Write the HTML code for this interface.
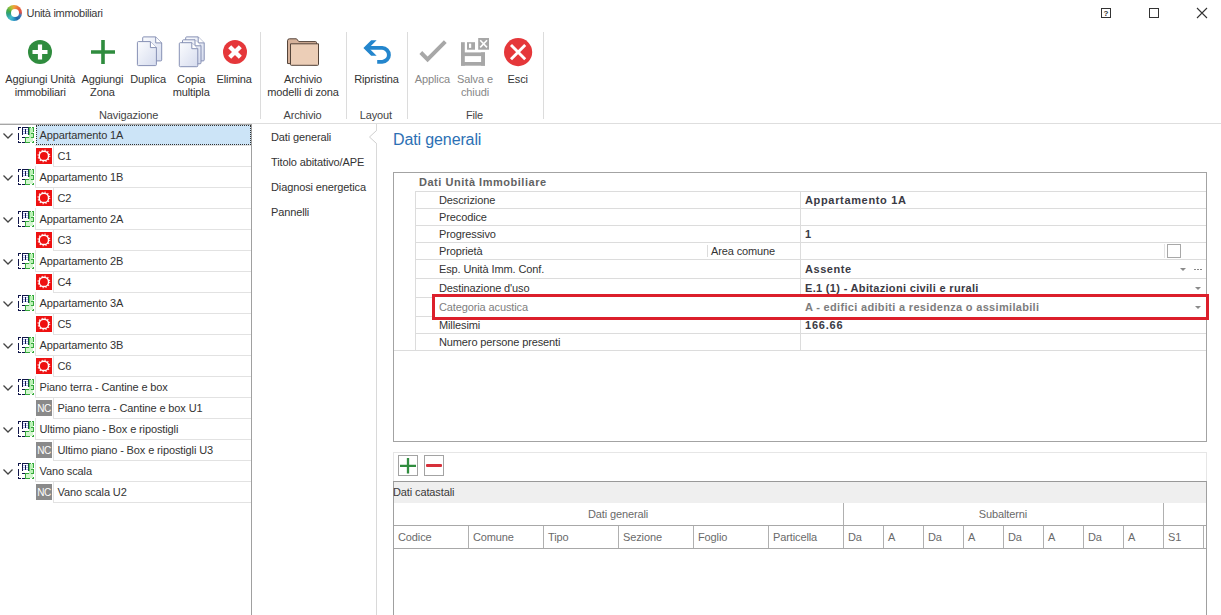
<!DOCTYPE html>
<html><head><meta charset="utf-8"><title>Unità immobiliari</title>
<style>
html,body{margin:0;padding:0;background:#fff;}
body{width:1221px;height:615px;position:relative;overflow:hidden;font-family:"Liberation Sans",sans-serif;font-size:11px;color:#333;}
.t{position:absolute;white-space:nowrap;line-height:13px;margin-top:1px;letter-spacing:-0.12px;}
.c{position:absolute;white-space:nowrap;line-height:13px;text-align:center;transform:translateX(-50%);margin-top:1px;letter-spacing:-0.12px;}
.l{position:absolute;background:#dcdcdc;}
.d{position:absolute;background:#9b9b9b;}
.b{font-weight:bold;}
.g{color:#878787;}
svg{position:absolute;overflow:visible;}
</style></head><body>

<div style="position:absolute;left:6px;top:5px;width:16px;height:16px;border-radius:50%;background:conic-gradient(from 0deg,#f2a23a 0deg,#e8683c 45deg,#dc4f48 85deg,#3a78b8 110deg,#1f64a6 150deg,#2f9fc8 185deg,#45bccc 215deg,#2fa08a 255deg,#3fa84a 290deg,#a8c43a 330deg,#f2a23a 360deg)"></div>
<div style="position:absolute;left:10.500px;top:9px;width:8px;height:8px;border-radius:50%;background:#fff"></div>
<div class="t" id="title" style="left:26.500px;top:6px;font-size:11px;color:#3a3a3a;letter-spacing:-0.3px">Unità immobiliari</div>
<svg style="left:1100px;top:7px" width="12" height="12" viewBox="0 0 12 12"><rect x="1.5" y="1.5" width="9" height="9" fill="none" stroke="#333" stroke-width="1"/><text x="6" y="9" font-size="8" font-weight="bold" text-anchor="middle" fill="#333" font-family="Liberation Sans, sans-serif">?</text></svg>
<svg style="left:1148px;top:7px" width="12" height="12" viewBox="0 0 12 12"><rect x="1.5" y="1.5" width="9" height="9" fill="none" stroke="#333" stroke-width="1"/></svg>
<svg style="left:1196px;top:7px" width="12" height="12" viewBox="0 0 12 12"><path d="M1 1L11 11M11 1L1 11" stroke="#333" stroke-width="1.1" fill="none"/></svg>
<div class="c " style="left:40.3px;top:72px">Aggiungi Unità<br>immobiliari</div>
<div class="c " style="left:102.4px;top:72px">Aggiungi<br>Zona</div>
<div class="c " style="left:148.2px;top:72px">Duplica</div>
<div class="c " style="left:191.2px;top:72px">Copia<br>multipla</div>
<div class="c " style="left:234.2px;top:72px">Elimina</div>
<div class="c " style="left:303px;top:72px">Archivio<br>modelli di zona</div>
<div class="c " style="left:376.5px;top:72px">Ripristina</div>
<div class="c g" style="left:432.4px;top:72px">Applica</div>
<div class="c g" style="left:475px;top:72px">Salva e<br>chiudi</div>
<div class="c " style="left:517.7px;top:72px">Esci</div>
<div class="c" style="left:128.6px;top:108px;color:#444">Navigazione</div>
<div class="c" style="left:302.5px;top:108px;color:#444">Archivio</div>
<div class="c" style="left:375.8px;top:108px;color:#444">Layout</div>
<div class="c" style="left:474.5px;top:108px;color:#444">File</div>
<div class="l" style="left:260px;top:32px;width:1px;height:87px"></div>
<div class="l" style="left:346px;top:32px;width:1px;height:87px"></div>
<div class="l" style="left:407px;top:32px;width:1px;height:87px"></div>
<div class="l" style="left:543px;top:32px;width:1px;height:87px"></div>
<div class="l" style="left:0;top:123px;width:1221px;height:1px;background:#dedede"></div>
<svg style="left:28px;top:40px" width="24" height="24" viewBox="0 0 24 24"><circle cx="12" cy="12" r="12" fill="#2f8c3e"/><path d="M12 4.5V19.5M4.5 12H19.5" stroke="#fff" stroke-width="4.2"/></svg>
<svg style="left:91px;top:40px" width="24" height="24" viewBox="0 0 24 24"><path d="M12 0V24M0 12H24" stroke="#2f8c3e" stroke-width="3.6"/></svg>
<svg style="left:0;top:0" width="260" height="70" viewBox="0 0 260 70"><defs><linearGradient id="dg" x1="0" y1="0" x2="1" y2="1"><stop offset="0" stop-color="#fbfcfe"/><stop offset="1" stop-color="#d6dcee"/></linearGradient></defs><g transform="translate(142.7,36.4)"><path d="M1 .5H13 L19 6.5 V23.5 a1 1 0 0 1 -1 1 H1 a1 1 0 0 1 -1 -1 V1.5 a1 1 0 0 1 1 -1z" fill="url(#dg)" stroke="#8690b4" stroke-width="1"/><path d="M13 .5 V6.5 H19" fill="#fff" stroke="#8690b4" stroke-width="1"/></g><g transform="translate(137.4,41.1)"><path d="M1 .5H13 L19 6.5 V23.5 a1 1 0 0 1 -1 1 H1 a1 1 0 0 1 -1 -1 V1.5 a1 1 0 0 1 1 -1z" fill="url(#dg)" stroke="#8690b4" stroke-width="1"/><path d="M13 .5 V6.5 H19" fill="#fff" stroke="#8690b4" stroke-width="1"/></g><g transform="translate(185.7,36.4)"><path d="M1 .5H12.5 L18.5 6.5 V23.5 a1 1 0 0 1 -1 1 H1 a1 1 0 0 1 -1 -1 V1.5 a1 1 0 0 1 1 -1z" fill="url(#dg)" stroke="#8690b4" stroke-width="1"/><path d="M12.5 .5 V6.5 H18.5" fill="#fff" stroke="#8690b4" stroke-width="1"/></g><g transform="translate(182.5,39.3)"><path d="M1 .5H12.5 L18.5 6.5 V23.5 a1 1 0 0 1 -1 1 H1 a1 1 0 0 1 -1 -1 V1.5 a1 1 0 0 1 1 -1z" fill="url(#dg)" stroke="#8690b4" stroke-width="1"/><path d="M12.5 .5 V6.5 H18.5" fill="#fff" stroke="#8690b4" stroke-width="1"/></g><g transform="translate(179.3,42.2)"><path d="M1 .5H12.5 L18.5 6.5 V23.5 a1 1 0 0 1 -1 1 H1 a1 1 0 0 1 -1 -1 V1.5 a1 1 0 0 1 1 -1z" fill="url(#dg)" stroke="#8690b4" stroke-width="1"/><path d="M12.5 .5 V6.5 H18.5" fill="#fff" stroke="#8690b4" stroke-width="1"/></g></svg>
<svg style="left:223px;top:40px" width="24" height="24" viewBox="0 0 24 24"><circle cx="12" cy="12" r="12" fill="#e5373a"/><path d="M6.700 6.700L17.300 17.300M17.300 6.700L6.700 17.300" stroke="#fff" stroke-width="4.300"/></svg>
<svg style="left:287px;top:38px" width="33" height="28" viewBox="0 0 33 28"><path d="M.5 25.500V2.800a2 2 0 0 1 2 -2H9.500l2.300 2.800H28.500a1 1 0 0 1 1 1V27z" fill="#d6b29b" stroke="#54443a" stroke-width="1"/><path d="M3.500 5.800H31.500V26.500a.8 .8 0 0 1 -.8 .8H4.300a.8 .8 0 0 1 -.8 -.8z" fill="#ecceb7" stroke="#54443a" stroke-width="1"/></svg>
<svg style="left:363px;top:40px" width="29" height="24" viewBox="0 0 29 24"><path d="M13.650 .160H8.190L.380 7.970L8.190 15.770H13.650L5.840 7.970z" fill="#2486cd"/><path d="M5 7.900H19.200A6.980 6.980 0 0 1 19.200 21.850H14.200" fill="none" stroke="#2486cd" stroke-width="3.900"/></svg>
<svg style="left:419px;top:40px" width="28" height="23" viewBox="0 0 28 23"><path d="M1.800 12.500L8.600 19.300L26.300 1.600" fill="none" stroke="#a7a7a7" stroke-width="4"/></svg>
<svg style="left:461px;top:38px" width="28" height="28" viewBox="0 0 28 28"><g fill="#a7a7a7"><rect x="0" y="4.200" width="3.800" height="23.500"/><rect x="0" y="24" width="24" height="3.700"/><rect x="20.100" y="14.400" width="3.900" height="13.300"/><rect x="0" y="14.400" width="24" height="3.700"/><rect x="6" y="4.200" width="8" height="7.500"/><rect x="17.200" y="0" width="10.800" height="11.700"/></g><rect x="8" y="5.600" width="2.200" height="4.300" fill="#fff"/><path d="M19.200 2.300L26 9.400M26 2.300L19.200 9.400" stroke="#fff" stroke-width="1.600"/></svg>
<svg style="left:504px;top:38px" width="28" height="28" viewBox="0 0 28 28"><circle cx="14.100" cy="14.100" r="14.100" fill="#e5373a"/><path d="M7 7L21.200 21.200M21.200 7L7 21.200" stroke="#fff" stroke-width="2.900"/></svg>
<svg width="0" height="0" style="left:0;top:0"><defs><g id="fp" shape-rendering="crispEdges"><rect x="11" y="1" width="4" height="14" fill="#bdf3b8"/><rect x="8" y="11" width="7" height="4" fill="#d3f7cf"/><rect x="5" y="2" width="2" height="1" fill="#b9c2f6"/><rect x="8" y="2" width="2" height="1" fill="#b9c2f6"/><rect x="5" y="4" width="2" height="1" fill="#b9c2f6"/><rect x="8" y="4" width="2" height="1" fill="#b9c2f6"/><rect x="5" y="6" width="2" height="1" fill="#b9c2f6"/><rect x="8" y="6" width="2" height="1" fill="#b9c2f6"/><rect x="0" y="0" width="1" height="3" fill="#10164a"/><rect x="0" y="6" width="1" height="7" fill="#10164a"/><rect x="0" y="14" width="1" height="2" fill="#10164a"/><rect x="0" y="0" width="3" height="1" fill="#10164a"/><rect x="4" y="0" width="6" height="1" fill="#10164a"/><rect x="4" y="0" width="1" height="8" fill="#10164a"/><rect x="7" y="2" width="1" height="5" fill="#10164a"/><rect x="10" y="0" width="1" height="8" fill="#164a3e"/><rect x="4" y="10" width="3" height="1" fill="#10164a"/><rect x="0" y="15" width="3" height="1" fill="#10164a"/><rect x="4" y="15" width="3" height="1" fill="#10164a"/><rect x="7" y="10" width="4" height="1" fill="#36a93c"/><rect x="13" y="10" width="3" height="1" fill="#36a93c"/><rect x="7" y="10" width="1" height="6" fill="#36a93c"/><rect x="7" y="15" width="5" height="1" fill="#36a93c"/><rect x="14" y="15" width="2" height="1" fill="#36a93c"/><rect x="15" y="0" width="1" height="5" fill="#36a93c"/><rect x="15" y="6" width="1" height="5" fill="#36a93c"/><rect x="15" y="14" width="1" height="2" fill="#36a93c"/><rect x="11" y="0" width="2" height="1" fill="#36a93c"/><rect x="14" y="0" width="2" height="1" fill="#36a93c"/><rect x="11" y="1" width="1" height="7" fill="#58c85c"/><rect x="13" y="6" width="3" height="1" fill="#36a93c"/></g><g id="rc"><rect width="16" height="16" fill="#ee1111"/><circle cx="7.900" cy="7.900" r="4.700" fill="none" stroke="#fff" stroke-width="1.500"/><circle cx="7.900" cy="7.900" r="5.800" fill="none" stroke="#fff" stroke-width="1.200" stroke-dasharray="1.100 1.937"/></g><g id="ch"><path d="M.5 .5L5 5L9.500 .5" fill="none" stroke="#444" stroke-width="1.300"/></g></defs></svg>
<div class="d" style="left:0;top:124px;width:252px;height:1px;background:#a6a6a6"></div><div style="position:absolute;left:36px;top:125px;width:215px;height:20px;background:#cce4f7;box-sizing:border-box;border:1px dotted #333"></div>
<div class="l" style="left:35px;top:145px;width:216px;height:1px;background:#e2e2e2"></div>
<svg style="left:3px;top:133px" width="10" height="6"><use href="#ch"/></svg>
<svg style="left:18px;top:127px" width="16" height="16"><use href="#fp"/></svg>
<div class="t" style="left:39.500px;top:128px">Appartamento 1A</div>
<div class="l" style="left:53px;top:166px;width:198px;height:1px;background:#e2e2e2"></div>
<div class="l" style="left:53px;top:145px;width:1px;height:21px;background:#e2e2e2"></div>
<svg style="left:36px;top:148px" width="16" height="16"><use href="#rc"/></svg>
<div class="t" style="left:57.500px;top:149px">C1</div>
<div class="l" style="left:35px;top:187px;width:216px;height:1px;background:#e2e2e2"></div>
<div class="l" style="left:35px;top:166px;width:1px;height:21px;background:#e2e2e2"></div>
<svg style="left:3px;top:175px" width="10" height="6"><use href="#ch"/></svg>
<svg style="left:18px;top:169px" width="16" height="16"><use href="#fp"/></svg>
<div class="t" style="left:39.500px;top:170px">Appartamento 1B</div>
<div class="l" style="left:53px;top:208px;width:198px;height:1px;background:#e2e2e2"></div>
<div class="l" style="left:53px;top:187px;width:1px;height:21px;background:#e2e2e2"></div>
<svg style="left:36px;top:190px" width="16" height="16"><use href="#rc"/></svg>
<div class="t" style="left:57.500px;top:191px">C2</div>
<div class="l" style="left:35px;top:229px;width:216px;height:1px;background:#e2e2e2"></div>
<div class="l" style="left:35px;top:208px;width:1px;height:21px;background:#e2e2e2"></div>
<svg style="left:3px;top:217px" width="10" height="6"><use href="#ch"/></svg>
<svg style="left:18px;top:211px" width="16" height="16"><use href="#fp"/></svg>
<div class="t" style="left:39.500px;top:212px">Appartamento 2A</div>
<div class="l" style="left:53px;top:250px;width:198px;height:1px;background:#e2e2e2"></div>
<div class="l" style="left:53px;top:229px;width:1px;height:21px;background:#e2e2e2"></div>
<svg style="left:36px;top:232px" width="16" height="16"><use href="#rc"/></svg>
<div class="t" style="left:57.500px;top:233px">C3</div>
<div class="l" style="left:35px;top:271px;width:216px;height:1px;background:#e2e2e2"></div>
<div class="l" style="left:35px;top:250px;width:1px;height:21px;background:#e2e2e2"></div>
<svg style="left:3px;top:259px" width="10" height="6"><use href="#ch"/></svg>
<svg style="left:18px;top:253px" width="16" height="16"><use href="#fp"/></svg>
<div class="t" style="left:39.500px;top:254px">Appartamento 2B</div>
<div class="l" style="left:53px;top:292px;width:198px;height:1px;background:#e2e2e2"></div>
<div class="l" style="left:53px;top:271px;width:1px;height:21px;background:#e2e2e2"></div>
<svg style="left:36px;top:274px" width="16" height="16"><use href="#rc"/></svg>
<div class="t" style="left:57.500px;top:275px">C4</div>
<div class="l" style="left:35px;top:313px;width:216px;height:1px;background:#e2e2e2"></div>
<div class="l" style="left:35px;top:292px;width:1px;height:21px;background:#e2e2e2"></div>
<svg style="left:3px;top:301px" width="10" height="6"><use href="#ch"/></svg>
<svg style="left:18px;top:295px" width="16" height="16"><use href="#fp"/></svg>
<div class="t" style="left:39.500px;top:296px">Appartamento 3A</div>
<div class="l" style="left:53px;top:334px;width:198px;height:1px;background:#e2e2e2"></div>
<div class="l" style="left:53px;top:313px;width:1px;height:21px;background:#e2e2e2"></div>
<svg style="left:36px;top:316px" width="16" height="16"><use href="#rc"/></svg>
<div class="t" style="left:57.500px;top:317px">C5</div>
<div class="l" style="left:35px;top:355px;width:216px;height:1px;background:#e2e2e2"></div>
<div class="l" style="left:35px;top:334px;width:1px;height:21px;background:#e2e2e2"></div>
<svg style="left:3px;top:343px" width="10" height="6"><use href="#ch"/></svg>
<svg style="left:18px;top:337px" width="16" height="16"><use href="#fp"/></svg>
<div class="t" style="left:39.500px;top:338px">Appartamento 3B</div>
<div class="l" style="left:53px;top:376px;width:198px;height:1px;background:#e2e2e2"></div>
<div class="l" style="left:53px;top:355px;width:1px;height:21px;background:#e2e2e2"></div>
<svg style="left:36px;top:358px" width="16" height="16"><use href="#rc"/></svg>
<div class="t" style="left:57.500px;top:359px">C6</div>
<div class="l" style="left:35px;top:397px;width:216px;height:1px;background:#e2e2e2"></div>
<div class="l" style="left:35px;top:376px;width:1px;height:21px;background:#e2e2e2"></div>
<svg style="left:3px;top:385px" width="10" height="6"><use href="#ch"/></svg>
<svg style="left:18px;top:379px" width="16" height="16"><use href="#fp"/></svg>
<div class="t" style="left:39.500px;top:380px">Piano terra - Cantine e box</div>
<div class="l" style="left:53px;top:418px;width:198px;height:1px;background:#e2e2e2"></div>
<div class="l" style="left:53px;top:397px;width:1px;height:21px;background:#e2e2e2"></div>
<div style="position:absolute;left:36px;top:400px;width:16px;height:16px;background:#8a8a8a;color:#fff;font-size:10px;line-height:18px;text-align:center;letter-spacing:-0.5px;overflow:hidden">NC</div>
<div class="t" style="left:57.500px;top:401px">Piano terra - Cantine e box U1</div>
<div class="l" style="left:35px;top:439px;width:216px;height:1px;background:#e2e2e2"></div>
<div class="l" style="left:35px;top:418px;width:1px;height:21px;background:#e2e2e2"></div>
<svg style="left:3px;top:427px" width="10" height="6"><use href="#ch"/></svg>
<svg style="left:18px;top:421px" width="16" height="16"><use href="#fp"/></svg>
<div class="t" style="left:39.500px;top:422px">Ultimo piano - Box e ripostigli</div>
<div class="l" style="left:53px;top:460px;width:198px;height:1px;background:#e2e2e2"></div>
<div class="l" style="left:53px;top:439px;width:1px;height:21px;background:#e2e2e2"></div>
<div style="position:absolute;left:36px;top:442px;width:16px;height:16px;background:#8a8a8a;color:#fff;font-size:10px;line-height:18px;text-align:center;letter-spacing:-0.5px;overflow:hidden">NC</div>
<div class="t" style="left:57.500px;top:443px">Ultimo piano - Box e ripostigli U3</div>
<div class="l" style="left:35px;top:481px;width:216px;height:1px;background:#e2e2e2"></div>
<div class="l" style="left:35px;top:460px;width:1px;height:21px;background:#e2e2e2"></div>
<svg style="left:3px;top:469px" width="10" height="6"><use href="#ch"/></svg>
<svg style="left:18px;top:463px" width="16" height="16"><use href="#fp"/></svg>
<div class="t" style="left:39.500px;top:464px">Vano scala</div>
<div class="l" style="left:53px;top:502px;width:198px;height:1px;background:#e2e2e2"></div>
<div class="l" style="left:53px;top:481px;width:1px;height:21px;background:#e2e2e2"></div>
<div style="position:absolute;left:36px;top:484px;width:16px;height:16px;background:#8a8a8a;color:#fff;font-size:10px;line-height:18px;text-align:center;letter-spacing:-0.5px;overflow:hidden">NC</div>
<div class="t" style="left:57.500px;top:485px">Vano scala U2</div>
<div class="d" style="left:251px;top:124px;width:1px;height:491px;background:#a0a0a0"></div>
<div class="t" style="left:271px;top:130px">Dati generali</div>
<div class="t" style="left:271px;top:155px">Titolo abitativo/APE</div>
<div class="t" style="left:271px;top:180px">Diagnosi energetica</div>
<div class="t" style="left:271px;top:205px">Pannelli</div>
<div class="l" style="left:376px;top:124px;width:1px;height:491px;background:#d9d9d9"></div>
<svg style="left:368px;top:129px" width="10" height="16" viewBox="0 0 10 16"><path d="M9.500 0V1.500L2 8L9.500 14.500V16" fill="#fff" stroke="none"/><path d="M8.500 1.500L1.500 8L8.500 14.500" fill="none" stroke="#cfcfcf" stroke-width="1"/><rect x="8.200" y="1.800" width="1.800" height="12.400" fill="#fff"/></svg>
<div class="t" id="h1" style="left:393px;top:129px;font-size:16px;line-height:20px;color:#2c70b4">Dati generali</div>
<div style="position:absolute;left:393px;top:172px;width:814px;height:270px;box-sizing:border-box;border:1px solid #a3a3a3"></div>
<div class="t b" id="pgh" style="left:419px;top:175px;color:#626262;letter-spacing:0.52px">Dati Unità Immobiliare</div>
<div class="l" style="left:415px;top:191px;width:791px;height:1px"></div>
<div class="l" style="left:415px;top:208px;width:791px;height:1px"></div>
<div class="l" style="left:415px;top:225px;width:791px;height:1px"></div>
<div class="l" style="left:415px;top:242px;width:791px;height:1px"></div>
<div class="l" style="left:415px;top:259px;width:791px;height:1px"></div>
<div class="l" style="left:415px;top:278px;width:791px;height:1px"></div>
<div class="l" style="left:415px;top:297px;width:791px;height:1px"></div>
<div class="l" style="left:415px;top:316px;width:791px;height:1px"></div>
<div class="l" style="left:415px;top:333px;width:791px;height:1px"></div>
<div class="l" style="left:415px;top:350px;width:791px;height:1px"></div>
<div class="l" style="left:394px;top:350px;width:22px;height:1px"></div>
<div class="l" style="left:415px;top:191px;width:1px;height:159px"></div>
<div class="l" style="left:800px;top:191px;width:1px;height:159px"></div>
<div style="position:absolute;left:432px;top:294px;width:777px;height:26px;box-sizing:border-box;border:3px solid #dc1f2b;background:#fff"></div>
<div class="t" style="left:439px;top:193px;color:#333">Descrizione</div>
<div class="t b" style="left:805px;top:193px;color:#3a3a44;letter-spacing:0.66px">Appartamento 1A</div>
<div class="t" style="left:439px;top:210px;color:#333">Precodice</div>
<div class="t" style="left:439px;top:227px;color:#333">Progressivo</div>
<div class="t b" style="left:805px;top:227px;color:#3a3a44;letter-spacing:0px">1</div>
<div class="t" style="left:439px;top:244px;color:#333">Proprietà</div>
<div class="t" style="left:439px;top:262px;color:#333">Esp. Unità Imm. Conf.</div>
<div class="t b" style="left:805px;top:262px;color:#3a3a44;letter-spacing:0.54px">Assente</div>
<div class="t" style="left:439px;top:281px;color:#333">Destinazione d'uso</div>
<div class="t b" style="left:805px;top:281px;color:#3a3a44;letter-spacing:0.32px">E.1 (1) - Abitazioni civili e rurali</div>
<div class="t" style="left:439px;top:300px;color:#808080">Categoria acustica</div>
<div class="t b" style="left:805px;top:300px;color:#7d7d7d;letter-spacing:0.32px">A - edifici adibiti a residenza o assimilabili</div>
<div class="t" style="left:439px;top:318px;color:#333">Millesimi</div>
<div class="t b" style="left:805px;top:318px;color:#3a3a44;letter-spacing:0.8px">166.66</div>
<div class="t" style="left:439px;top:335px;color:#333">Numero persone presenti</div>
<div class="l" style="left:707px;top:245px;width:1px;height:12px"></div>
<div class="t" style="left:711px;top:244px">Area comune</div>
<div class="l" style="left:1164px;top:244px;width:1px;height:14px;background:#e4e4e4"></div>
<div style="position:absolute;left:1167px;top:244px;width:14px;height:14px;box-sizing:border-box;border:1px solid #a8a8a8;background:#fff"></div>
<svg style="left:1180px;top:268px" width="6" height="3" viewBox="0 0 6 3"><path d="M0 0H6L3 3z" fill="#8a8a8a"/></svg>
<svg style="left:1195px;top:287px" width="6" height="3" viewBox="0 0 6 3"><path d="M0 0H6L3 3z" fill="#8a8a8a"/></svg>
<svg style="left:1195px;top:306px" width="6" height="3" viewBox="0 0 6 3"><path d="M0 0H6L3 3z" fill="#8a8a8a"/></svg>
<svg style="left:1194px;top:269px" width="8" height="2" viewBox="0 0 8 2"><rect x="0" y="0" width="2" height="1" fill="#888"/><rect x="3" y="0" width="2" height="1" fill="#888"/><rect x="6" y="0" width="2" height="1" fill="#888"/></svg>
<div style="position:absolute;left:393px;top:452px;width:814px;height:30px;box-sizing:border-box;border:1px solid #e6e6e6;border-bottom:none"></div>
<div style="position:absolute;left:398px;top:455px;width:20px;height:21px;box-sizing:border-box;border:1px solid #a3a3a3"></div>
<svg style="left:400px;top:458px" width="16" height="16" viewBox="0 0 16 16"><path d="M8 0V15.500M0 7.800H16" stroke="#2f8c3e" stroke-width="2.300"/></svg>
<div style="position:absolute;left:424px;top:455px;width:20px;height:21px;box-sizing:border-box;border:1px solid #a3a3a3"></div>
<div style="position:absolute;left:426px;top:464px;width:16px;height:3px;background:#d6303a;border-radius:1px"></div>
<div style="position:absolute;left:393px;top:481px;width:814px;height:140px;box-sizing:border-box;border:1px solid #a0a0a0;border-top:1px solid #999"></div>
<div style="position:absolute;left:394px;top:482px;width:812px;height:21px;background:#efefef"></div>
<div class="t" style="left:393px;top:485px;color:#3a3a3a">Dati catastali</div>
<div class="d" style="left:394px;top:525px;width:812px;height:1px;background:#a8a8a8"></div>
<div class="d" style="left:394px;top:548px;width:812px;height:1px;background:#a8a8a8"></div>
<div class="t" style="left:398px;top:530px;color:#6a6a6a">Codice</div>
<div class="d" style="left:468px;top:526px;width:1px;height:22px;background:#b0b0b0"></div>
<div class="t" style="left:473px;top:530px;color:#6a6a6a">Comune</div>
<div class="d" style="left:543px;top:526px;width:1px;height:22px;background:#b0b0b0"></div>
<div class="t" style="left:548px;top:530px;color:#6a6a6a">Tipo</div>
<div class="d" style="left:618px;top:526px;width:1px;height:22px;background:#b0b0b0"></div>
<div class="t" style="left:623px;top:530px;color:#6a6a6a">Sezione</div>
<div class="d" style="left:693px;top:526px;width:1px;height:22px;background:#b0b0b0"></div>
<div class="t" style="left:698px;top:530px;color:#6a6a6a">Foglio</div>
<div class="d" style="left:768px;top:526px;width:1px;height:22px;background:#b0b0b0"></div>
<div class="t" style="left:773px;top:530px;color:#6a6a6a">Particella</div>
<div class="d" style="left:843px;top:526px;width:1px;height:22px;background:#b0b0b0"></div>
<div class="t" style="left:848px;top:530px;color:#6a6a6a">Da</div>
<div class="d" style="left:883px;top:526px;width:1px;height:22px;background:#b0b0b0"></div>
<div class="t" style="left:888px;top:530px;color:#6a6a6a">A</div>
<div class="d" style="left:923px;top:526px;width:1px;height:22px;background:#b0b0b0"></div>
<div class="t" style="left:928px;top:530px;color:#6a6a6a">Da</div>
<div class="d" style="left:963px;top:526px;width:1px;height:22px;background:#b0b0b0"></div>
<div class="t" style="left:968px;top:530px;color:#6a6a6a">A</div>
<div class="d" style="left:1003px;top:526px;width:1px;height:22px;background:#b0b0b0"></div>
<div class="t" style="left:1008px;top:530px;color:#6a6a6a">Da</div>
<div class="d" style="left:1043px;top:526px;width:1px;height:22px;background:#b0b0b0"></div>
<div class="t" style="left:1048px;top:530px;color:#6a6a6a">A</div>
<div class="d" style="left:1083px;top:526px;width:1px;height:22px;background:#b0b0b0"></div>
<div class="t" style="left:1088px;top:530px;color:#6a6a6a">Da</div>
<div class="d" style="left:1123px;top:526px;width:1px;height:22px;background:#b0b0b0"></div>
<div class="t" style="left:1128px;top:530px;color:#6a6a6a">A</div>
<div class="d" style="left:1163px;top:526px;width:1px;height:22px;background:#b0b0b0"></div>
<div class="t" style="left:1168px;top:530px;color:#6a6a6a">S1</div>
<div class="d" style="left:1203px;top:526px;width:1px;height:22px;background:#b0b0b0"></div>
<div class="d" style="left:843px;top:503px;width:1px;height:22px;background:#b0b0b0"></div>
<div class="d" style="left:1163px;top:503px;width:1px;height:22px;background:#b0b0b0"></div>
<div class="c" style="left:618px;top:507px;color:#6a6a6a">Dati generali</div>
<div class="c" style="left:1003px;top:507px;color:#6a6a6a">Subalterni</div>
</body></html>
